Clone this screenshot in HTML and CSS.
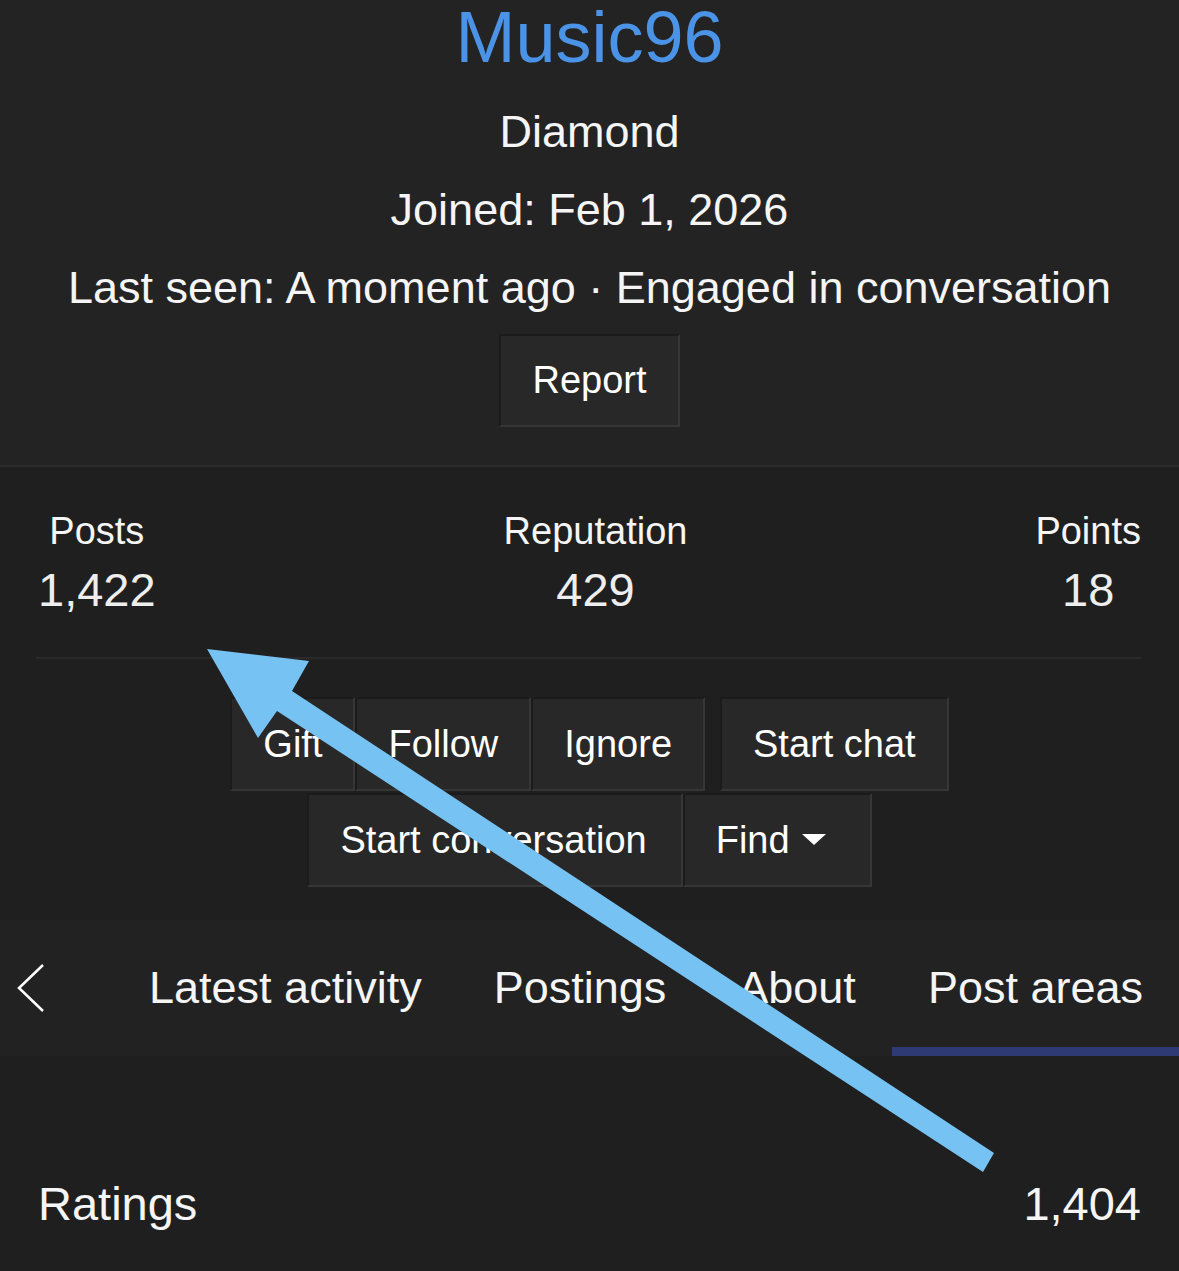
FILE: index.html
```html
<!DOCTYPE html>
<html lang="en">
<head>
  <meta charset="UTF-8">
  <meta name="viewport" content="width=device-width, initial-scale=1">
  <title>Music96 - Profile</title>
  <link rel="stylesheet" href="styles.css">
</head>
<body>

  <div class="profile-head">
    <h1 class="username">Music96</h1>
    <p class="info first">Diamond</p>
    <p class="info">Joined: Feb 1, 2026</p>
    <p class="info">Last seen: A moment ago · Engaged in conversation</p>
    <button class="btn report">Report</button>
  </div>

  <div class="stats">
    <div class="stat">
      <div class="stat-label">Posts</div>
      <div class="stat-value">1,422</div>
    </div>
    <div class="stat">
      <div class="stat-label">Reputation</div>
      <div class="stat-value">429</div>
    </div>
    <div class="stat">
      <div class="stat-label">Points</div>
      <div class="stat-value">18</div>
    </div>
  </div>
  <div class="divider"></div>

  <div class="actions">
    <div class="action-row">
      <div class="btn-group">
        <button class="btn">Gift</button>
        <button class="btn">Follow</button>
        <button class="btn">Ignore</button>
      </div>
      <button class="btn">Start chat</button>
    </div>
    <div class="action-row">
      <div class="btn-group">
        <button class="btn wide">Start conversation</button>
        <button class="btn find">Find<span class="caret"></span></button>
      </div>
    </div>
  </div>

  <div class="tabs">
    <div class="tab-prev">
      <svg width="30" height="50" viewBox="0 0 30 50">
        <polyline points="27,2 3,25 27,48" fill="none" stroke="#fff" stroke-width="2.5"/>
      </svg>
    </div>
    <div class="tab">Latest activity</div>
    <div class="tab">Postings</div>
    <div class="tab">About</div>
    <div class="tab active">Post areas</div>
  </div>

  <div class="ratings">
    <span>Ratings</span>
    <span>1,404</span>
  </div>

  <!-- annotation arrow -->
  <svg class="arrow" width="1179" height="1271" viewBox="0 0 1179 1271">
    <polygon points="207,649 309,661 292,691 994,1153 983,1172 277,711 258,738" fill="#76c2f2"/>
  </svg>

</body>
</html>
```

FILE: styles.css
```css
body {
  margin: 0;
  min-height: 1271px;
  background: #1f1f1f;
  color: #f5f5f5;
  font-family: "Liberation Sans", Arial, sans-serif;
  position: relative;
  overflow: hidden;
}
.profile-head {
  background: #232323;
  text-align: center;
  padding-top: 2px;
  padding-bottom: 38px;
  border-bottom: 2px solid #2b2b2b;
}
.username {
  margin: 0;
  font-size: 72px;
  line-height: 70px;
  font-weight: normal;
  color: #4a93e6;
}
.info {
  margin: 0;
  font-size: 45px;
  line-height: 78px;
}
.info.first {
  margin-top: 21px;
}
.btn {
  font-family: inherit;
  font-size: 38px;
  line-height: 46px;
  color: #fff;
  background: #282828;
  padding: 22px 31px;
  border: 2px solid;
  border-color: #1b1b1b #363636 #363636 #1b1b1b;
  border-radius: 0;
}
.btn.wide {
  padding: 22px 34px 22px 31px;
}
.btn.find {
  padding-right: 44px;
}
.report {
  margin-top: 7px;
  line-height: 45px;
}
.stats {
  display: flex;
  justify-content: space-between;
  padding: 42px 38px 0;
  text-align: center;
}
.stat-label {
  font-size: 38px;
  line-height: 44px;
}
.stat-value {
  font-size: 47px;
  line-height: 54px;
  margin-top: 10px;
  color: #eee;
}
.divider {
  margin: 40px 38px 0 36px;
  border-top: 2px solid #2a2a2a;
}
.actions {
  padding-top: 38px;
  display: flex;
  flex-direction: column;
  align-items: center;
  gap: 2px;
}
.action-row {
  display: flex;
  gap: 15px;
}
.btn-group {
  display: flex;
}
.caret {
  display: inline-block;
  margin-left: 12px;
  vertical-align: middle;
  border-left: 12px solid transparent;
  border-right: 12px solid transparent;
  border-top: 11px solid #fff;
  position: relative;
  top: -3px;
}
.tabs {
  margin-top: 33px;
  background: #222;
  height: 136px;
  display: flex;
  font-size: 45px;
  white-space: nowrap;
  overflow: hidden;
}
.tab-prev {
  width: 100px;
  flex: none;
  margin-right: auto;
  padding-left: 16px;
  box-sizing: border-box;
  display: flex;
  align-items: center;
}
.tab {
  flex: none;
  padding: 0 36px;
  display: flex;
  align-items: center;
  border-top: 9px solid transparent;
  border-bottom: 9px solid transparent;
}
.tab.active {
  border-bottom-color: #2e3a74;
}
.ratings {
  display: flex;
  justify-content: space-between;
  padding: 0 38px;
  margin-top: 121px;
  font-size: 47px;
  line-height: 54px;
}
.arrow {
  position: absolute;
  top: 0;
  left: 0;
  pointer-events: none;
}
```
